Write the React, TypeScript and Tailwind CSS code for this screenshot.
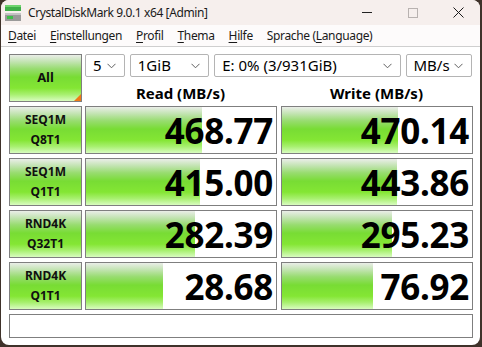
import React from "react";

const font = { fontFamily: '"Noto Sans", "Open Sans", sans-serif' };

const GREEN =
  "bg-[linear-gradient(to_bottom,#eaeee8_0%,#c4e4b4_14%,#98dc70_30%,#78dc34_48%,#84e634_72%,#a8f070_86%,#d8fcc0_100%)]";

function Combo({ w, text }: { w: string; text: string }) {
  return (
    <div
      className={`${w} h-[23px] border border-[#b4b4b4] rounded-[2px] bg-white flex items-center justify-between pl-[7px] pr-[8px] text-[15px] text-black leading-none`}
    >
      <span>{text}</span>
      <svg width="9" height="6" viewBox="0 0 9 6" className="shrink-0">
        <path d="M0.5 0.8 L4.5 4.8 L8.5 0.8" fill="none" stroke="#606060" strokeWidth="1" />
      </svg>
    </div>
  );
}

function Label({ l1, l2 }: { l1: string; l2: string }) {
  return (
    <div
      className={`h-[48px] border border-[#7f7f7f] ${GREEN} flex flex-col items-center justify-center text-[12px] font-bold leading-[20px] text-[#101010]`}
    >
      <span>{l1}</span>
      <span>{l2}</span>
    </div>
  );
}

function Cell({ value, fill }: { value: string; fill: number }) {
  return (
    <div className="relative h-[48px] border border-[#7f7f7f] bg-white overflow-hidden">
      <div className={`absolute left-0 top-0 bottom-0 ${GREEN}`} style={{ width: fill }} />
      <div className="relative h-full flex items-center justify-end pr-[3px] text-[35px] font-bold text-black leading-none tracking-[-0.3px]">
        {value}
      </div>
    </div>
  );
}

const rows = [
  { l1: "SEQ1M", l2: "Q8T1", r: "468.77", rf: 116, w: "470.14", wf: 116 },
  { l1: "SEQ1M", l2: "Q1T1", r: "415.00", rf: 114, w: "443.86", wf: 115 },
  { l1: "RND4K", l2: "Q32T1", r: "282.39", rf: 109, w: "295.23", wf: 110 },
  { l1: "RND4K", l2: "Q1T1", r: "28.68", rf: 77, w: "76.92", wf: 91 },
];

function U({ c }: { c: string }) {
  return <span className="underline underline-offset-[2px] decoration-[1px]">{c}</span>;
}

export default function App() {
  return (
    <div className="w-[482px] h-[347px] bg-[#3f322a] overflow-hidden" style={font}>
      <div className="ml-[1px] w-[479px] h-[345px] rounded-[8px] overflow-hidden bg-white flex flex-col">
        {/* Title bar */}
        <div className="h-[25px] bg-[#f6efed] flex items-center shrink-0">
          <svg width="16" height="16" viewBox="0 0 16 16" className="ml-[4px] mr-[7px]">
            <rect x="0" y="0" width="16" height="6" fill="#3fae49" />
            <rect x="0" y="0" width="16" height="2" fill="#6fd46f" />
            <rect x="0" y="8" width="16" height="8" fill="#9a9a9a" />
            <rect x="0" y="8" width="16" height="2" fill="#c4c4c4" />
            <rect x="2" y="11" width="6" height="3" fill="#3fbf4a" />
          </svg>
          <span className="text-[12px] text-[#1a1a1a] tracking-[-0.4px]">CrystalDiskMark 9.0.1 x64 [Admin]</span>
          <div className="ml-auto flex items-center h-full">
            <div className="w-[46px] h-full flex items-center justify-center ml-[4px]">
              <div className="w-[10px] h-[1px] bg-[#222]" />
            </div>
            <div className="w-[46px] h-full flex items-center justify-center">
              <div className="w-[10px] h-[10px] border border-[#b8b2b0]" />
            </div>
            <div className="w-[44px] h-full flex items-center justify-center">
              <svg width="11" height="11" viewBox="0 0 11 11">
                <path d="M0.5 0.5 L10.5 10.5 M10.5 0.5 L0.5 10.5" stroke="#1a1a1a" strokeWidth="1" />
              </svg>
            </div>
          </div>
        </div>
        {/* Menu bar */}
        <div className="h-[22px] bg-[#fdfbfb] border-b border-[#cfcfcf] flex items-center pl-[7px] gap-[14px] text-[12px] text-[#1a1a1a] tracking-[-0.35px] shrink-0">
          <span><U c="D" />atei</span>
          <span><U c="E" />instellungen</span>
          <span><U c="P" />rofil</span>
          <span><U c="T" />hema</span>
          <span><U c="H" />ilfe</span>
          <span>Sprache (<U c="L" />anguage)</span>
        </div>
        {/* Client */}
        <div className="pl-[8px] pt-[7px] flex flex-col">
          <div className="grid grid-cols-[73px_192px_192px] gap-x-[3px] h-[48px]">
            <div className={`relative h-[48px] border border-[#7f7f7f] ${GREEN} flex items-center justify-center text-[13px] font-bold text-[#101010]`}>
              All
              <div className="absolute right-0 bottom-0 w-0 h-0 border-l-[7px] border-l-transparent border-b-[7px] border-b-[#f07a16]" />
            </div>
            <div className="col-span-2 flex flex-col h-[48px]">
              <div className="flex gap-[5px]">
                <Combo w="w-[40px]" text="5" />
                <Combo w="w-[80px]" text="1GiB" />
                <Combo w="w-[188px]" text="E: 0% (3/931GiB)" />
                <Combo w="w-[67px]" text="MB/s" />
              </div>
              <div className="flex gap-[4px] mt-[7px]">
                <div className="w-[192px] text-center text-[15px] font-bold text-black leading-[18px]">Read (MB/s)</div>
                <div className="w-[192px] text-center text-[15px] font-bold text-black leading-[18px] ml-[1px]">Write (MB/s)</div>
              </div>
            </div>
          </div>
          <div className="flex flex-col gap-[4px] mt-[4px]">
            {rows.map((r, i) => (
              <div key={i} className="flex">
                <div className="w-[73px]">
                  <Label l1={r.l1} l2={r.l2} />
                </div>
                <div className="w-[192px] ml-[3px]">
                  <Cell value={r.r} fill={r.rf} />
                </div>
                <div className="w-[192px] ml-[4px]">
                  <Cell value={r.w} fill={r.wf} />
                </div>
              </div>
            ))}
          </div>
          <div className="mt-[4px] w-[464px] h-[24px] border border-[#7f7f7f] bg-white" />
        </div>
      </div>
    </div>
  );
}
